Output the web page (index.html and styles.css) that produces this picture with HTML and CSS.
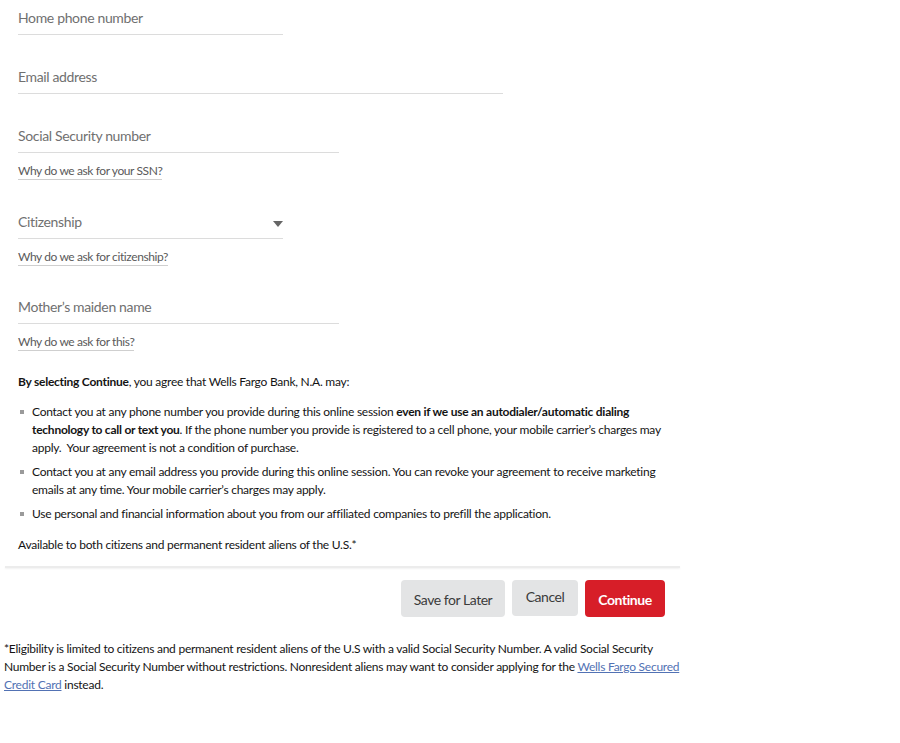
FILE: index.html
```html
<!DOCTYPE html>
<html lang="en">
<head>
<meta charset="utf-8">
<title>Application</title>
<link rel="stylesheet" href="styles.css">
</head>
<body>
<main class="page">
  <section class="form">
    <div class="field w-264"><span class="placeholder">Home phone number</span></div>
    <div class="field w-484 gap"><span class="placeholder">Email address</span></div>
    <div class="field w-320 gap"><span class="placeholder">Social Security number</span></div>
    <a class="help" href="#">Why do we ask for your SSN?</a>
    <div class="field w-264 gap-help first-help select"><span class="placeholder">Citizenship</span><span class="caret"></span></div>
    <a class="help" href="#">Why do we ask for citizenship?</a>
    <div class="field w-320 gap-help"><span class="placeholder">Mother’s maiden name</span></div>
    <a class="help" href="#">Why do we ask for this?</a>

    <p class="intro"><b>By selecting Continue</b>, you agree that Wells Fargo Bank, N.A. may:</p>
    <ul class="terms">
      <li>Contact you at any phone number you provide during this online session <b>even if we use an autodialer/automatic dialing<br>technology to call or text you</b>. If the phone number you provide is registered to a cell phone, your mobile carrier’s charges may<br>apply.&nbsp; Your agreement is not a condition of purchase.</li>
      <li>Contact you at any email address you provide during this online session. You can revoke your agreement to receive marketing<br>emails at any time. Your mobile carrier’s charges may apply.</li>
      <li>Use personal and financial information about you from our affiliated companies to prefill the application.</li>
    </ul>
    <p class="avail">Available to both citizens and permanent resident aliens of the U.S.*</p>
  </section>
  <div class="divider"></div>
  <div class="actions">
    <button class="btn btn-gray btn-save">Save for Later</button>
    <button class="btn btn-gray btn-cancel">Cancel</button>
    <button class="btn btn-red">Continue</button>
  </div>
  <p class="footnote">*Eligibility is limited to citizens and permanent resident aliens of the U.S with a valid Social Security Number. A valid Social Security<br>Number is a Social Security Number without restrictions. Nonresident aliens may want to consider applying for the <a href="#">Wells Fargo Secured<br>Credit Card</a> instead.</p>
</main>
</body>
</html>
```

FILE: styles.css
```css
* { box-sizing: border-box; }
html, body { margin: 0; padding: 0; background: #fff; }
body {
  font-family: Lato, "Liberation Sans", sans-serif;
  color: #141414;
  font-size: 12px;
  letter-spacing: -0.25px;
}
.page { width: 900px; }
.form { padding-left: 18px; }
.field {
  position: relative;
  height: 35px;
  padding-top: 9px;
  border-bottom: 1px solid #dcdcdc;
  font-size: 14px;
  letter-spacing: -0.35px;
  line-height: 18px;
  color: #707070;
}
.w-264 { width: 265px; }
.w-320 { width: 321px; }
.w-484 { width: 485px; }
.gap { margin-top: 24px; }
.gap-help { margin-top: 23px; }
.first-help { margin-top: 24px; }
.caret {
  position: absolute;
  right: 0;
  top: 17px;
  width: 0; height: 0;
  border-left: 5px solid transparent;
  border-right: 5px solid transparent;
  border-top: 6px solid #666;
}
.help {
  display: inline-block;
  margin-top: 10px;
  color: #5a5a5a;
  text-decoration: none;
  font-size: 12px;
  letter-spacing: -0.4px;
  line-height: 16px;
  border-bottom: 1px solid #cfcfcf;
}
.intro {
  margin: 22px 0 0;
  line-height: 18px;
}
.intro b, .terms b { font-weight: 700; }
.terms {
  list-style: none;
  margin: 12px 0 0;
  padding: 0 0 0 14px;
}
.terms li {
  position: relative;
  line-height: 18px;
  margin-bottom: 6px;
}
.terms li:last-child { margin-bottom: 5px; }
.terms li::before {
  content: "";
  position: absolute;
  left: -12px;
  top: 7px;
  width: 4px; height: 4px;
  background: #9a9a9a;
}
.avail { margin: 13px 0 0; line-height: 18px; }
.divider {
  margin: 12px 0 0 5px;
  width: 675px;
  height: 2px;
  background: #ececec;
  box-shadow: 0 1px 2px rgba(0,0,0,0.06);
}
.actions {
  display: flex;
  gap: 7px;
  margin-top: 12px;
  padding-left: 401px;
}
.btn {
  height: 37px;
  border: none;
  border-radius: 4px;
  font-family: inherit;
  font-size: 14px;
  letter-spacing: -0.45px;
  padding: 2px 13px 0;
}
.btn-gray { background: #e3e4e5; color: #3b3b3b; }
.btn-save { width: 104px; padding: 2px 0 0; }
.btn-cancel { width: 66px; padding: 0 0 4px; height: 36px; }
.btn-red { background: #d71e28; color: #fff; font-weight: 700; width: 80px; padding: 2px 0 0; }
.footnote {
  margin: 23px 0 0 4px;
  line-height: 18px;
}
.footnote a { color: #5272b4; text-decoration: underline; }
```
